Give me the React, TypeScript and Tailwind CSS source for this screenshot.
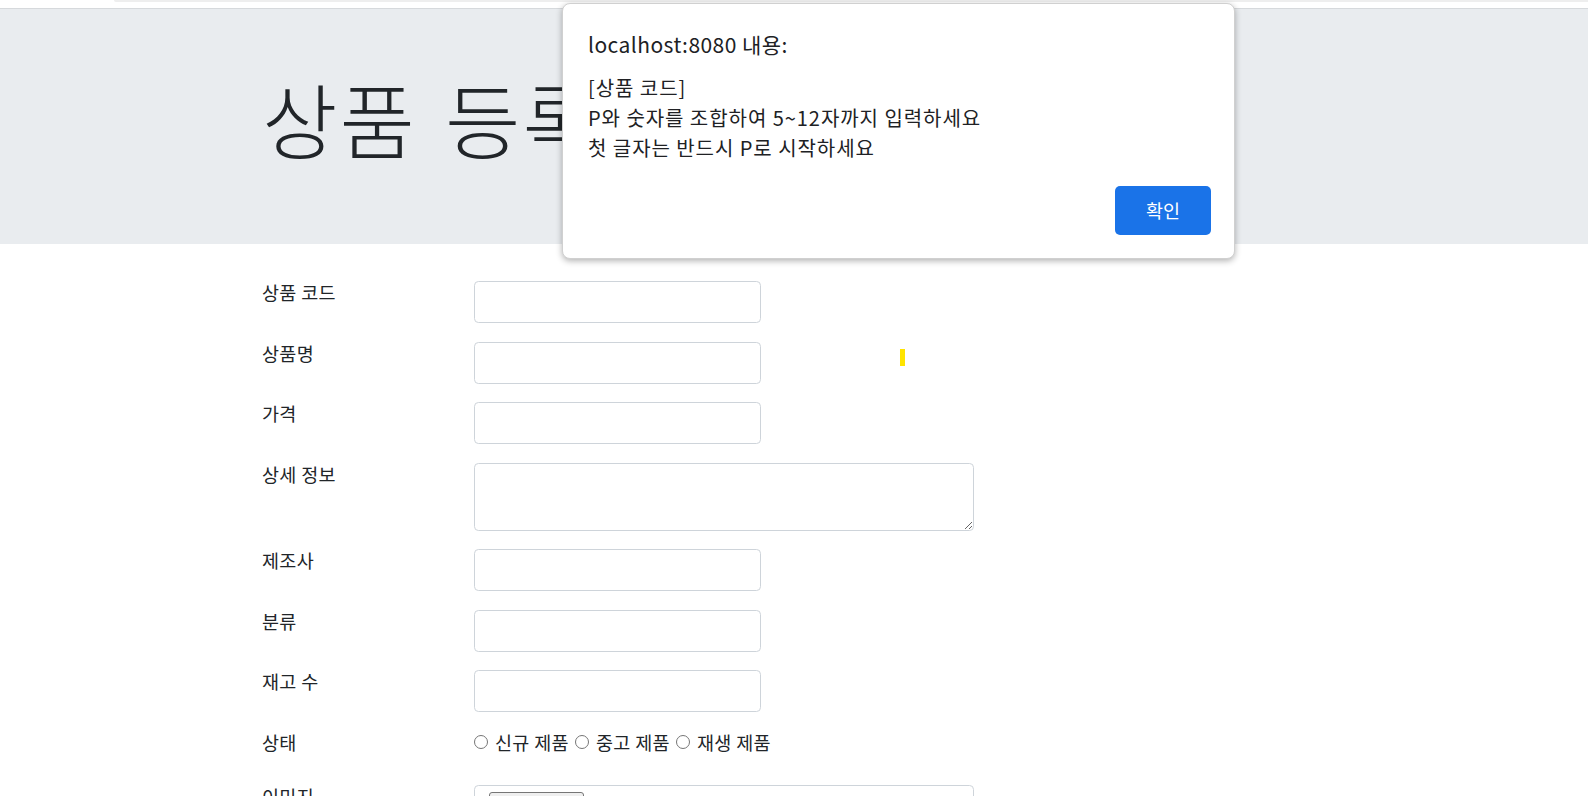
import React from 'react';

const font = { fontFamily: '"Noto Sans CJK KR", "Noto Sans", sans-serif' };

const TextRow: React.FC<{ label: string }> = ({ label }) => (
  <div className="flex mb-[18.5px]">
    <label className="w-[212px] shrink-0 leading-[22px]">{label}</label>
    <input
      type="text"
      className="w-[287px] h-[42px] border border-[#ced4da] rounded-[4.4px] bg-white outline-none"
    />
  </div>
);

const Radio: React.FC<{ label: string }> = ({ label }) => (
  <span className="inline-flex items-center">
    <span className="w-[14px] h-[14px] rounded-full border border-[#767676] bg-white mr-[7px]" />
    <span className="mr-[6px]">{label}</span>
  </span>
);

export default function App() {
  return (
    <div
      className="relative w-[1588px] h-[796px] overflow-hidden bg-white text-[#212529] text-[18.5px] tracking-[0.35px]"
      style={font}
    >
      {/* top strip */}
      <div className="h-[9px] flex border-b border-[#d6d9dc]">
        <div className="w-[114px]" />
        <div className="flex-1 h-[2px] bg-[#eeeeee] rounded-bl-[4px]" />
      </div>

      {/* jumbotron */}
      <div className="bg-[#e9ecef] h-[235px] mb-[37px] pt-[61px]">
        <div className="pl-[262px]">
          <h1 className="text-[82px] font-light leading-[95px] tracking-[2px] [word-spacing:8px]">상품 등록</h1>
        </div>
      </div>

      {/* form */}
      <div className="pl-[262px]">
        <TextRow label="상품 코드" />
        <TextRow label="상품명" />
        <TextRow label="가격" />
        <div className="flex mb-[18.5px]">
          <label className="w-[212px] shrink-0 leading-[22px]">상세 정보</label>
          <textarea
            rows={2}
            className="w-[500px] h-[68px] border border-[#ced4da] rounded-[4.4px] bg-white outline-none"
          />
        </div>
        <TextRow label="제조사" />
        <TextRow label="분류" />
        <TextRow label="재고 수" />
        <div className="flex mb-[18px] h-[36px]">
          <label className="w-[212px] shrink-0 leading-[22px]">상태</label>
          <div className="flex items-start leading-[22px]">
            <Radio label="신규 제품" />
            <Radio label="중고 제품" />
            <Radio label="재생 제품" />
          </div>
        </div>
        <div className="flex">
          <label className="w-[212px] shrink-0 leading-[22px]">이미지</label>
          <div className="w-[500px] h-[48px] border border-[#ced4da] rounded-[4.4px] bg-white pl-[14px] pt-[6px]">
            <div className="w-[95px] h-[26px] border border-[#767676] rounded-[3px] bg-[#efefef]" />
          </div>
        </div>
      </div>

      {/* cursor highlight */}
      <div className="absolute left-[900px] top-[349px] w-[5px] h-[17px] bg-[#ffe400]" />

      {/* alert dialog */}
      <div className="absolute left-[562px] top-[3px] w-[673px] h-[256px] bg-white border border-[#d0d0d0] rounded-[8px] shadow-[0_2px_6px_rgba(0,0,0,0.3)] pl-[25px] pr-[23px] pt-[25px] tracking-normal">
        <div className="text-[21px] leading-[30px] text-[#202124] tracking-[0.45px]">localhost:8080 내용:</div>
        <div className="mt-[14px] text-[20px] leading-[30px] text-[#202124] tracking-[0.95px]">
          <div>[상품 코드]</div>
          <div>P와 숫자를 조합하여 5~12자까지 입력하세요</div>
          <div>첫 글자는 반드시 P로 시작하세요</div>
        </div>
        <div className="flex justify-end mt-[23px]">
          <button className="w-[96px] h-[49px] bg-[#1a73e8] rounded-[5px] text-white text-[18.5px]">확인</button>
        </div>
      </div>
    </div>
  );
}
